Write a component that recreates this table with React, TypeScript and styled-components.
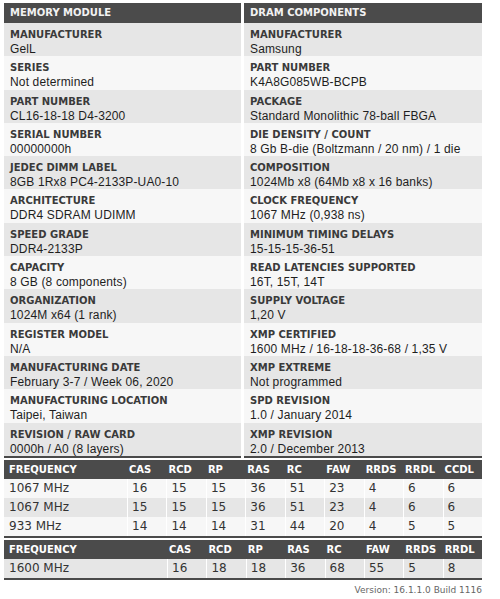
import React from 'react';
import styled, { createGlobalStyle } from 'styled-components';

const GlobalStyle = createGlobalStyle`
  body {
    margin: 0;
    background: #ffffff;
  }
`;

const Page = styled.div`
  width: 478px;
  padding: 3px 0 0 4px;
`;

const InfoGrid = styled.div`
  display: grid;
  grid-template-columns: 237px 238px;
  column-gap: 3px;
`;

const Column = styled.div`
  display: flex;
  flex-direction: column;
  border-bottom: 2px solid #4a4a4a;
`;

const ColumnHeader = styled.div`
  height: 20px;
  line-height: 20px;
  padding-left: 6px;
  background: #4b4b4b;
  color: #f2f2f2;
  font-family: 'DejaVu Sans', sans-serif;
  font-weight: bold;
  font-size: 10px;
`;

const InfoRow = styled.div<{ $alt: boolean }>`
  box-sizing: border-box;
  height: 33.3px;
  padding: 6px 0 0 6px;
  background: ${({ $alt }) => ($alt ? '#f7f7f7' : '#e6e6e6')};
`;

const Label = styled.div`
  font-family: 'DejaVu Sans', sans-serif;
  font-weight: bold;
  font-size: 10px;
  line-height: 12px;
  color: #3a3a3a;
  white-space: nowrap;
`;

const Value = styled.div`
  margin-top: 1px;
  font-family: 'Liberation Sans', Arial, sans-serif;
  font-size: 12px;
  letter-spacing: 0.15px;
  line-height: 14px;
  color: #1e1e1e;
  white-space: nowrap;
`;

const TimingTable = styled.div`
  margin-top: 2px;
  border-bottom: 2px solid #4a4a4a;
`;

const TimingRow = styled.div<{ $first: number; $count: number; $bg: string }>`
  display: grid;
  grid-template-columns: ${({ $first, $count }) => `${$first}px repeat(${$count}, 1fr)`};
  height: 19px;
  background: ${({ $bg }) => $bg};
`;

const HeadCell = styled.div`
  padding-left: 2px;
  line-height: 19px;
  color: #ffffff;
  font-family: 'DejaVu Sans', sans-serif;
  font-weight: bold;
  font-size: 10px;
  white-space: nowrap;

  &:first-child {
    padding-left: 5px;
  }
`;

const Cell = styled.div`
  padding-left: 4px;
  line-height: 19px;
  border-left: 1px solid #ffffff;
  color: #333333;
  font-family: 'DejaVu Sans', sans-serif;
  font-size: 12px;
  white-space: nowrap;

  &:first-child {
    padding-left: 5px;
    border-left: none;
  }
`;

const Version = styled.div`
  margin-top: 4px;
  padding-right: 0;
  text-align: right;
  font-family: 'DejaVu Sans', sans-serif;
  font-size: 9px;
  line-height: 12px;
  color: #666666;
`;

const moduleInfo: [string, string][] = [
  ['MANUFACTURER', 'GelL'],
  ['SERIES', 'Not determined'],
  ['PART NUMBER', 'CL16-18-18 D4-3200'],
  ['SERIAL NUMBER', '00000000h'],
  ['JEDEC DIMM LABEL', '8GB 1Rx8 PC4-2133P-UA0-10'],
  ['ARCHITECTURE', 'DDR4 SDRAM UDIMM'],
  ['SPEED GRADE', 'DDR4-2133P'],
  ['CAPACITY', '8 GB (8 components)'],
  ['ORGANIZATION', '1024M x64 (1 rank)'],
  ['REGISTER MODEL', 'N/A'],
  ['MANUFACTURING DATE', 'February 3-7 / Week 06, 2020'],
  ['MANUFACTURING LOCATION', 'Taipei, Taiwan'],
  ['REVISION / RAW CARD', '0000h / A0 (8 layers)'],
];

const dramInfo: [string, string][] = [
  ['MANUFACTURER', 'Samsung'],
  ['PART NUMBER', 'K4A8G085WB-BCPB'],
  ['PACKAGE', 'Standard Monolithic 78-ball FBGA'],
  ['DIE DENSITY / COUNT', '8 Gb B-die (Boltzmann / 20 nm) / 1 die'],
  ['COMPOSITION', '1024Mb x8 (64Mb x8 x 16 banks)'],
  ['CLOCK FREQUENCY', '1067 MHz (0,938 ns)'],
  ['MINIMUM TIMING DELAYS', '15-15-15-36-51'],
  ['READ LATENCIES SUPPORTED', '16T, 15T, 14T'],
  ['SUPPLY VOLTAGE', '1,20 V'],
  ['XMP CERTIFIED', '1600 MHz / 16-18-18-36-68 / 1,35 V'],
  ['XMP EXTREME', 'Not programmed'],
  ['SPD REVISION', '1.0 / January 2014'],
  ['XMP REVISION', '2.0 / December 2013'],
];

const jedecHead = ['FREQUENCY', 'CAS', 'RCD', 'RP', 'RAS', 'RC', 'FAW', 'RRDS', 'RRDL', 'CCDL'];
const jedecRows = [
  ['1067 MHz', '16', '15', '15', '36', '51', '23', '4', '6', '6'],
  ['1067 MHz', '15', '15', '15', '36', '51', '23', '4', '6', '6'],
  ['933 MHz', '14', '14', '14', '31', '44', '20', '4', '5', '5'],
];

const xmpHead = ['FREQUENCY', 'CAS', 'RCD', 'RP', 'RAS', 'RC', 'FAW', 'RRDS', 'RRDL'];
const xmpRows = [['1600 MHz', '16', '18', '18', '36', '68', '55', '5', '8']];

const InfoColumn: React.FC<{ title: string; items: [string, string][] }> = ({ title, items }) => (
  <Column>
    <ColumnHeader>{title}</ColumnHeader>
    {items.map(([label, value], i) => (
      <InfoRow key={label} $alt={i % 2 === 1}>
        <Label>{label}</Label>
        <Value>{value}</Value>
      </InfoRow>
    ))}
  </Column>
);

const Timings: React.FC<{ head: string[]; rows: string[][]; first: number; bodyBg: (i: number) => string }> = ({
  head,
  rows,
  first,
  bodyBg,
}) => (
  <TimingTable>
    <TimingRow $first={first} $count={head.length - 1} $bg="#4b4b4b">
      {head.map((h) => (
        <HeadCell key={h}>{h}</HeadCell>
      ))}
    </TimingRow>
    {rows.map((row, i) => (
      <TimingRow key={i} $first={first} $count={head.length - 1} $bg={bodyBg(i)}>
        {row.map((c, j) => (
          <Cell key={j}>{c}</Cell>
        ))}
      </TimingRow>
    ))}
  </TimingTable>
);

const App: React.FC = () => (
  <>
    <GlobalStyle />
    <Page>
      <InfoGrid>
        <InfoColumn title="MEMORY MODULE" items={moduleInfo} />
        <InfoColumn title="DRAM COMPONENTS" items={dramInfo} />
      </InfoGrid>
      <Timings
        head={jedecHead}
        rows={jedecRows}
        first={123}
        bodyBg={(i) => (i % 2 === 1 ? '#e6e6e6' : '#f7f7f7')}
      />
      <Timings head={xmpHead} rows={xmpRows} first={163} bodyBg={() => '#e6e6e6'} />
      <Version>Version: 16.1.1.0 Build 1116</Version>
    </Page>
  </>
);

export default App;
